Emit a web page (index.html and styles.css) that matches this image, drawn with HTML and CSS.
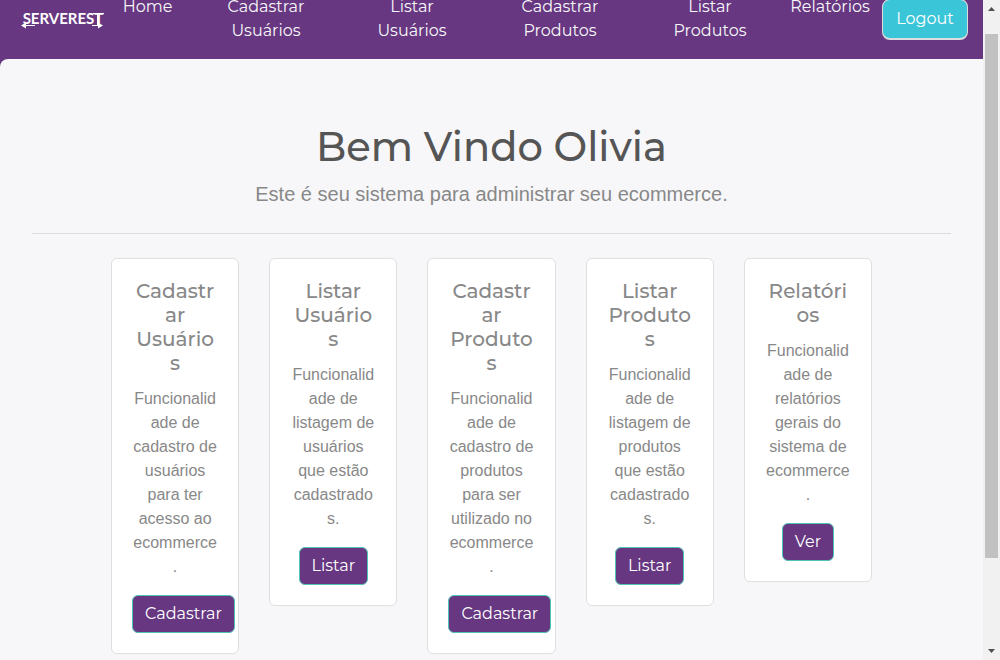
FILE: index.html
```html
<!DOCTYPE html>
<html lang="pt-BR">
<head>
<meta charset="utf-8">
<meta name="viewport" content="width=device-width, initial-scale=1">
<title>Front - ServeRest</title>
<link rel="stylesheet" href="styles.css">
</head>
<body>
<div class="viewport">
  <div class="page">
    <nav class="navbar">
      <svg class="logo" viewBox="0 0 84 28" width="84" height="28" role="img" aria-label="ServeRest">
        <text class="logo-text" x="42" y="20" text-anchor="middle">SERVEREST</text>
        <g fill="none" stroke="#fff" stroke-width="1">
          <path d="M2 21.500H14M71 21.500H80M72 9.500H83M76.500 9V21"/>
        </g>
        <path fill="#fff" d="M0 21.500L5 18.500V24.500ZM82 21.500L77 18.500V24.500Z"/>
      </svg>
      <a class="nav-link" href="#">Home</a>
      <a class="nav-link" href="#">Cadastrar<br>Usuários</a>
      <a class="nav-link" href="#">Listar<br>Usuários</a>
      <a class="nav-link" href="#">Cadastrar<br>Produtos</a>
      <a class="nav-link" href="#">Listar<br>Produtos</a>
      <a class="nav-link" href="#">Relatórios</a>
      <button class="logout" type="button">Logout</button>
    </nav>
    <main class="content">
      <h1 class="title">Bem Vindo Olivia</h1>
      <p class="lead">Este é seu sistema para administrar seu ecommerce.</p>
      <hr class="rule">
      <div class="cards">
        <section class="card">
          <h2 class="card-title">Cadastr<br>ar<br>Usuário<br>s</h2>
          <p class="card-text">Funcionalidade de cadastro de usuários para ter acesso ao ecommerce.</p>
          <a class="btn" href="#">Cadastrar</a>
        </section>
        <section class="card">
          <h2 class="card-title">Listar<br>Usuário<br>s</h2>
          <p class="card-text">Funcionalidade de listagem de usuários que estão cadastrados.</p>
          <a class="btn" href="#">Listar</a>
        </section>
        <section class="card">
          <h2 class="card-title">Cadastr<br>ar<br>Produto<br>s</h2>
          <p class="card-text">Funcionalidade de cadastro de produtos para ser utilizado no ecommerce.</p>
          <a class="btn" href="#">Cadastrar</a>
        </section>
        <section class="card">
          <h2 class="card-title">Listar<br>Produto<br>s</h2>
          <p class="card-text">Funcionalidade de listagem de produtos que estão cadastrados.</p>
          <a class="btn" href="#">Listar</a>
        </section>
        <section class="card">
          <h2 class="card-title">Relatóri<br>os</h2>
          <p class="card-text">Funcionalidade de relatórios gerais do sistema de ecommerce.</p>
          <a class="btn" href="#">Ver</a>
        </section>
      </div>
    </main>
  </div>
  <div class="scrollbar" aria-hidden="true">
    <svg class="arrow" viewBox="0 0 17 17" width="17" height="17"><path d="M5 11L8.500 7L12 11Z" fill="#505050"/></svg>
    <div class="track"><div class="thumb"></div></div>
    <svg class="arrow" viewBox="0 0 17 17" width="17" height="17"><path d="M5 6L8.500 10L12 6Z" fill="#505050"/></svg>
  </div>
</div>
</body>
</html>
```
FILE: styles.css
```css
* { box-sizing: border-box; }

body {
  margin: 0;
  background: #f7f7f9;
  color: #888;
  font: 16px/24px "Liberation Sans", Arial, sans-serif;
}

.viewport {
  display: flex;
  height: 100vh;
  overflow: hidden;
}

/* The page starts scrolled a little way down. */
.page {
  flex: 1;
  min-width: 0;
  align-self: flex-start;
  margin-top: -32px;
  background: #673781;
}

.navbar {
  display: grid;
  grid-template-columns: 108fr 79fr 158fr 134fr 162fr 138fr 102fr 87fr;
  align-items: start;
  padding: 27px 15px 16px 0;
}

.logo {
  margin: 9px 0 0 21px;
}

.logo-text {
  fill: #fff;
  font: bold 15px Lato, "Open Sans", sans-serif;
}

.nav-link {
  color: #f7f7f9;
  font: 16px/24px Montserrat, Inter, sans-serif;
  text-align: center;
  text-decoration: none;
}

.logout {
  height: 41px;
  margin: 4px 0 0 1px;
  padding: 0;
  border: 1px solid #ddd;
  border-bottom-width: 2px;
  border-radius: 8px;
  background: #3ac5d9;
  color: #fff;
  font: 16px/24px Montserrat, Inter, sans-serif;
}

.content {
  min-height: 100vh;
  padding: 64px 32px;
  border-top-left-radius: 8px;
  background: #f7f7f9;
  text-align: center;
}

.title {
  margin: 0 0 8px;
  color: #555;
  font: 500 40px/48px Montserrat, Inter, sans-serif;
}

.lead {
  margin: 0 0 24px;
  font-size: 20px;
  line-height: 30px;
}

.rule {
  height: 1px;
  margin: 0 0 24px;
  border: 0;
  background: #dcdcde;
}

.cards {
  display: grid;
  grid-template-columns: repeat(5, minmax(0, 1fr));
  gap: 30px;
  align-items: start;
  padding: 0 79px;
}

.card {
  padding: 20px;
  border: 1px solid #dfdfdf;
  border-radius: 6px;
  background: #fff;
  overflow-wrap: break-word;
}

.card-title {
  margin: 0 0 12px;
  font: 500 20px/24px Montserrat, Inter, sans-serif;
}

.card-text {
  margin: 0 0 16px;
}

.btn {
  display: inline-block;
  padding: 6px 12px;
  border: 1px solid #4fc3b5;
  border-radius: 6px;
  background: #673781;
  color: #fff;
  font: 16px/24px Montserrat, Inter, sans-serif;
  text-decoration: none;
  white-space: nowrap;
  vertical-align: top;
}

.scrollbar {
  display: flex;
  flex: 0 0 17px;
  flex-direction: column;
  background: #f1f1f1;
}

.arrow { display: block; }

.track {
  flex: 1;
  padding: 17px 2px 0;
}

.thumb {
  height: 86%;
  background: #c1c1c1;
}
```
